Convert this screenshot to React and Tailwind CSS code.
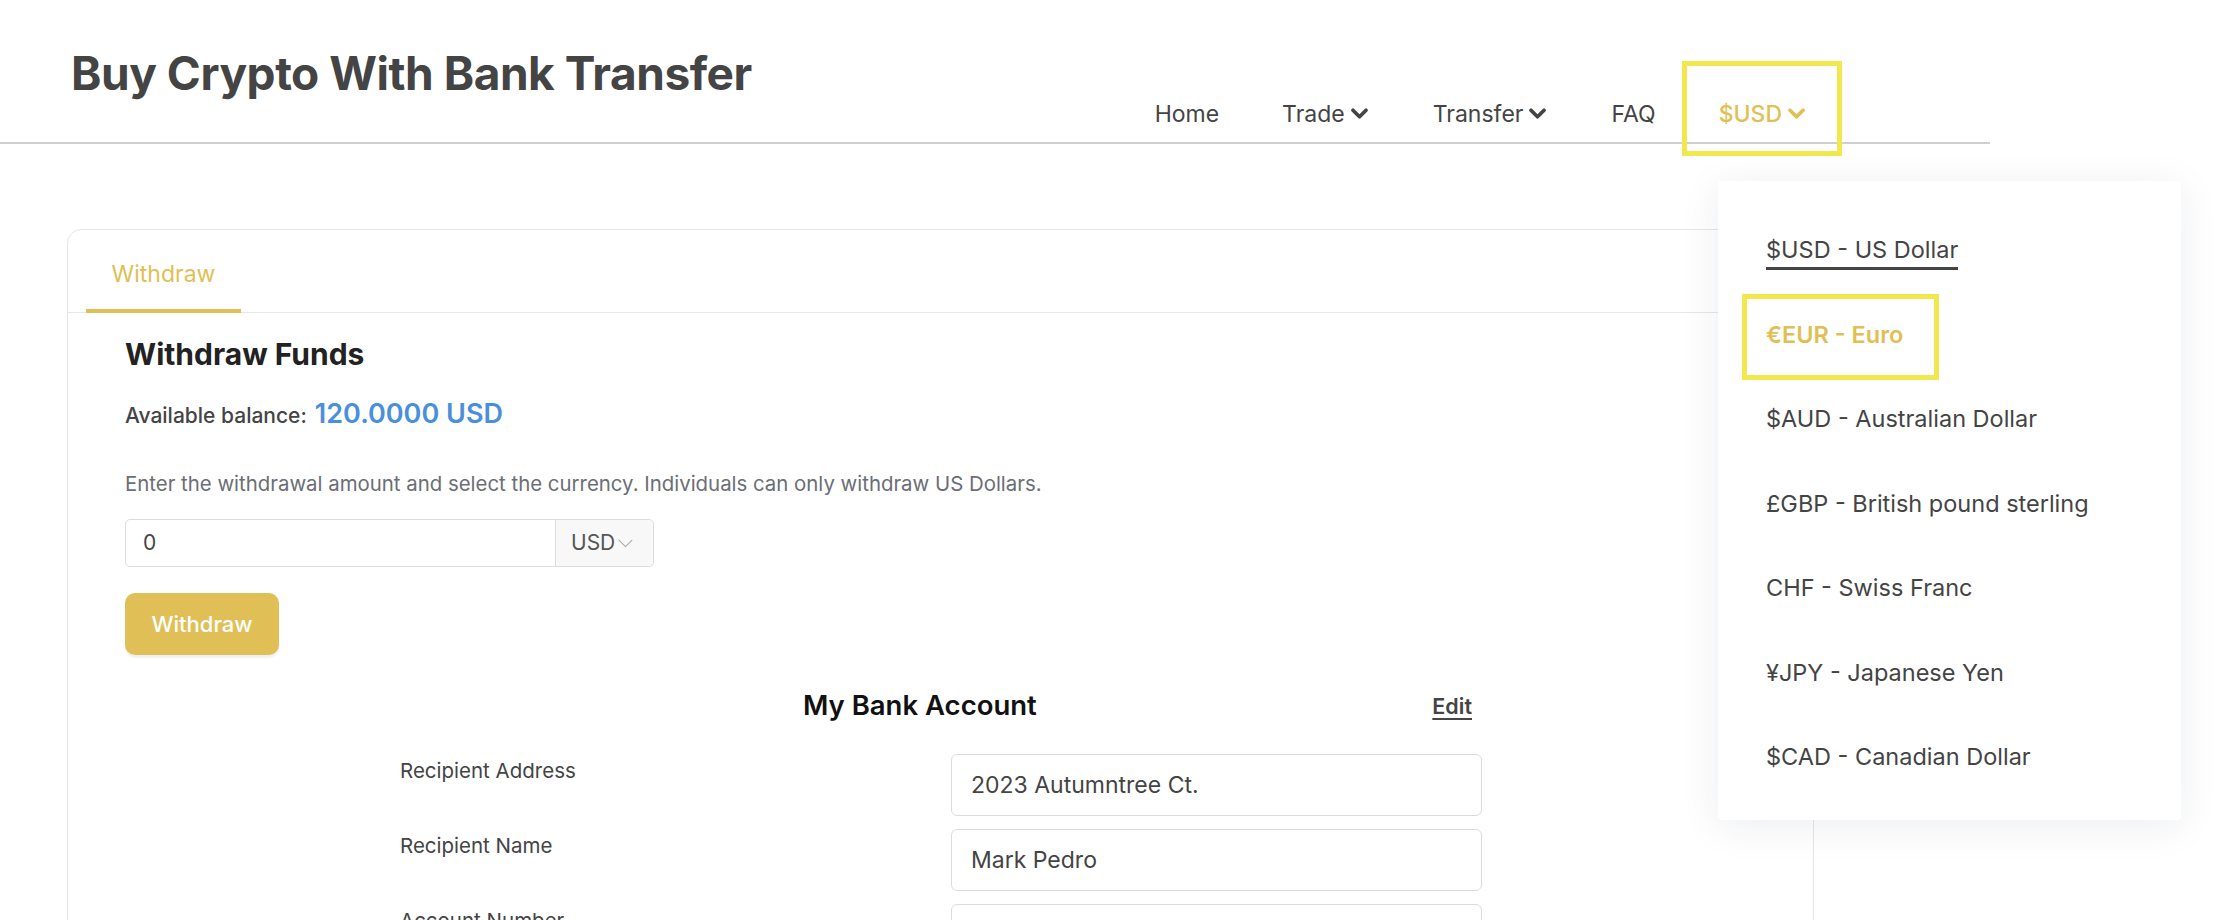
import React from "react";

const Chevron = ({ className = "" }) => (
  <svg viewBox="0 0 16 16" className={className} fill="none" stroke="currentColor" strokeWidth="2.8" strokeLinecap="round" strokeLinejoin="round">
    <path d="M3 5.5l5 5 5-5" />
  </svg>
);

const ThinChevron = ({ className = "" }) => (
  <svg viewBox="0 0 16 16" className={className} fill="none" stroke="currentColor" strokeWidth="1" strokeLinecap="round" strokeLinejoin="round">
    <path d="M2 5l6 6 6-6" />
  </svg>
);

const currencies = [
  { label: "$USD - US Dollar", active: true },
  { label: "€EUR - Euro", gold: true },
  { label: "$AUD - Australian Dollar" },
  { label: "£GBP - British pound sterling" },
  { label: "CHF - Swiss Franc" },
  { label: "¥JPY - Japanese Yen" },
  { label: "$CAD - Canadian Dollar" },
];

const rows = [
  { label: "Recipient Address", value: "2023 Autumntree Ct." },
  { label: "Recipient Name", value: "Mark Pedro" },
  { label: "Account Number", value: "" },
];

export default function App() {
  return (
    <div
      className="relative w-[2226px] h-[920px] overflow-hidden bg-white text-[#444]"
      style={{ fontFamily: "Inter, 'Noto Sans', sans-serif" }}
    >
      {/* Header */}
      <header className="flex w-[1990px] h-[144px] border-b-2 border-[#d0d0d0]">
        <h1 className="pl-[71px] pt-[44px] text-[46px] leading-[58px] font-bold tracking-[-0.01em] text-[#444]">
          Buy Crypto With Bank Transfer
        </h1>
        <nav className="ml-auto mr-[183px] flex items-end gap-[63px] pb-[11px] text-[23px] text-[#444]">
          <span>Home</span>
          <span className="flex items-center gap-[4px]">
            Trade <Chevron className="w-[21px] h-[21px]" />
          </span>
          <span className="flex items-center gap-[4px]">
            Transfer <Chevron className="w-[21px] h-[21px]" />
          </span>
          <span>FAQ</span>
          <span className="flex items-center gap-[4px] text-[#e0bf55] font-medium">
            $USD <Chevron className="w-[21px] h-[21px]" />
          </span>
        </nav>
      </header>

      {/* Card */}
      <div className="ml-[67px] mt-[85px] w-[1747px] h-[800px] rounded-[14px] border border-[#e6e6e6]">
        <div className="h-[83px] border-b border-[#e6e6e6] pl-[18px] flex">
          <div className="flex items-center justify-center pt-[10px] w-[155px] border-b-[4px] border-[#e0bf55] text-[23px] text-[#e0bf55] -mb-px">
            Withdraw
          </div>
        </div>

        <div className="pl-[57px] pt-[21px]">
          <h2 className="text-[30px] font-bold text-[#222] leading-[40px]">Withdraw Funds</h2>
          <div className="mt-[20px] flex items-baseline gap-[8px]">
            <span className="text-[21px] font-medium text-[#444]">Available balance:</span>
            <span className="text-[27px] font-semibold text-[#4a8fdb]">120.0000 USD</span>
          </div>
          <p className="mt-[34px] text-[20.4px] text-[#6b6e75]">
            Enter the withdrawal amount and select the currency. Individuals can only withdraw US Dollars.
          </p>
          <div className="mt-[20px] flex w-[529px] h-[48px] rounded-[5px] border border-[#dcdcdc]">
            <div className="flex-1 flex items-center pl-[17px] text-[21px] text-[#444]">0</div>
            <div className="w-[98px] flex items-center pl-[15px] gap-[2px] border-l border-[#dcdcdc] bg-[#f8f8f8] rounded-r-[5px] text-[21px] text-[#555]">
              USD <ThinChevron className="w-[17px] h-[17px] text-[#aaa]" />
            </div>
          </div>
          <button className="mt-[26px] w-[154px] h-[62px] rounded-[10px] bg-[#e1bf57] text-white text-[22px] font-medium shadow-[0_3px_2px_rgba(0,0,0,0.06)]">
            Withdraw
          </button>

          {/* Bank account */}
          <div className="ml-[275px] w-[1082px] mt-[26px]">
            <div className="flex items-center h-[50px]">
              <h3 className="pl-[403px] text-[27.5px] font-semibold text-[#111]">My Bank Account</h3>
              <span className="ml-auto mr-[10px] text-[21.5px] font-semibold underline underline-offset-[4px] text-[#444]">
                Edit
              </span>
            </div>
            <div className="mt-[23px] flex flex-col gap-[13px]">
              {rows.map((r) => (
                <div key={r.label} className="grid grid-cols-[551px_531px]">
                  <div className="pt-[2px] text-[20.5px] text-[#444]">{r.label}</div>
                  <div className="h-[62px] rounded-[6px] border border-[#dcdcdc] flex items-center pl-[19px] text-[23px] text-[#444]">
                    {r.value}
                  </div>
                </div>
              ))}
            </div>
          </div>
        </div>
      </div>

      {/* Dropdown */}
      <div className="absolute left-[1718px] top-[181px] w-[463px] h-[639px] bg-white rounded-[4px] shadow-[0_6px_40px_rgba(30,40,80,0.08)] pl-[48px] pt-[54px]">
        <ul className="flex flex-col">
          {currencies.map((c) => (
            <li key={c.label} className="h-[84.5px] flex items-start">
              <span
                className={
                  c.active
                    ? "text-[23.5px] text-[#444] border-b-[3px] border-[#444] leading-[30px] pb-[2px]"
                    : c.gold
                    ? "text-[23.5px] text-[#e0bf55] font-semibold leading-[30px]"
                    : "text-[23.5px] text-[#444] leading-[30px]"
                }
              >
                {c.label}
              </span>
            </li>
          ))}
        </ul>
      </div>

      {/* Annotation highlight boxes */}
      <div className="absolute left-[1682px] top-[61px] w-[160px] h-[95px] border-[5px] border-[#f2e74c]" />
      <div className="absolute left-[1742px] top-[294px] w-[197px] h-[86px] border-[5px] border-[#f2e74c]" />
    </div>
  );
}
